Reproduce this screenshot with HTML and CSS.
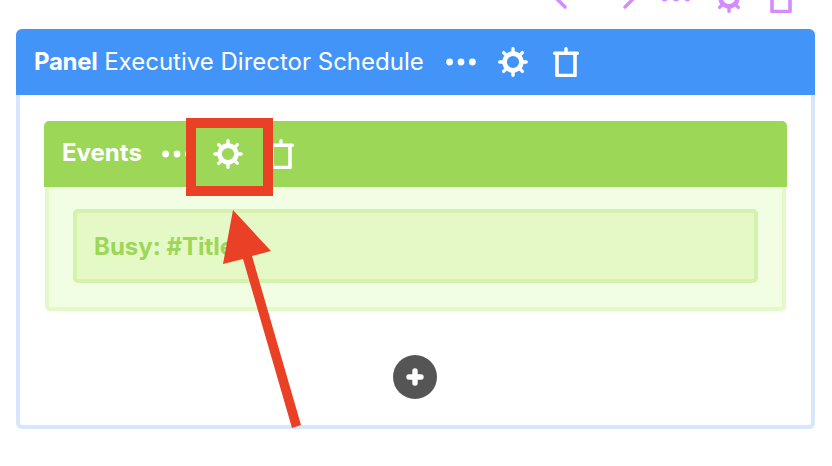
FILE: index.html
```html
<!DOCTYPE html>
<html lang="en">
<head>
    <meta charset="UTF-8" />
    <title>Executive Director Schedule</title>
    <link rel="stylesheet" href="styles.css">
</head>
<body>
<svg width="0" height="0" class="defs">
    <defs>
        <g id="gear">
            <circle cx="15" cy="15" r="8.4" fill="none" stroke="currentColor" stroke-width="4.6" />
            <g stroke="currentColor" stroke-width="3.4" stroke-linecap="round">
                <line x1="15" y1="5" x2="15" y2="1.8" />
                <line x1="15" y1="25" x2="15" y2="28.2" />
                <line x1="5" y1="15" x2="1.8" y2="15" />
                <line x1="25" y1="15" x2="28.2" y2="15" />
                <line x1="7.9" y1="7.9" x2="5.6" y2="5.6" />
                <line x1="22.1" y1="7.9" x2="24.4" y2="5.6" />
                <line x1="7.9" y1="22.1" x2="5.6" y2="24.4" />
                <line x1="22.1" y1="22.1" x2="24.4" y2="24.4" />
            </g>
        </g>
        <g id="trash" fill="none" stroke="currentColor" stroke-linecap="round" stroke-linejoin="round">
            <path d="M3.7 6.2h22.6" stroke-width="3.4" />
            <path d="M15 1.8v4" stroke-width="3.4" />
            <path d="M6 6.5v22h18v-22" stroke-width="3.6" />
        </g>
        <g id="dots" fill="currentColor">
            <circle cx="3.6" cy="15" r="3.4" />
            <circle cx="15" cy="15" r="3.4" />
            <circle cx="26.4" cy="15" r="3.4" />
        </g>
    </defs>
</svg>

<div class="toolbar">
    <svg class="icon tool-prev" viewBox="0 0 30 30"><path d="M14 6l-9 9 9 9" fill="none" stroke="currentColor" stroke-width="3.4" stroke-linecap="round" stroke-linejoin="round" /></svg>
    <svg class="icon tool-next" viewBox="0 0 30 30"><path d="M16 6l9 9-9 9" fill="none" stroke="currentColor" stroke-width="3.4" stroke-linecap="round" stroke-linejoin="round" /></svg>
    <svg class="icon tool-dots" viewBox="0 0 30 30"><use href="#dots" /></svg>
    <svg class="icon tool-gear" viewBox="0 0 30 30"><use href="#gear" /></svg>
    <svg class="icon tool-trash" viewBox="0 0 30 30"><use href="#trash" /></svg>
</div>

<div class="panel">
    <div class="panel-head">
        <span class="panel-title"><b>Panel</b> Executive Director Schedule</span>
        <svg class="icon head-dots" viewBox="0 0 30 30"><use href="#dots" /></svg>
        <svg class="icon head-gear" viewBox="0 0 30 30"><use href="#gear" /></svg>
        <svg class="icon head-trash" viewBox="0 0 30 30"><use href="#trash" /></svg>
    </div>

    <div class="events">
        <div class="events-head">
            <span class="events-title">Events</span>
            <svg class="icon events-dots" viewBox="0 0 30 30"><use href="#dots" /></svg>
            <svg class="icon events-gear" viewBox="0 0 30 30"><use href="#gear" /></svg>
            <svg class="icon events-trash" viewBox="0 0 30 30"><use href="#trash" /></svg>
        </div>
        <div class="events-body">
            <div class="event-item">Busy: #Title</div>
        </div>
    </div>

    <div class="add-row">
        <div class="add-button">
            <svg class="add-icon" viewBox="0 0 18 18"><path d="M9 3v12M3 9h12" stroke="currentColor" stroke-width="5.4" stroke-linecap="round" /></svg>
        </div>
    </div>
</div>

<!-- пометки поверх скриншота -->
<div class="callout-box"></div>
<svg class="callout-arrow" width="832" height="466" viewBox="0 0 832 466">
    <path d="M233 210L271 251 252 256 301 425 292 428 243 259 223 264Z" fill="#ea4025" />
</svg>
</body>
</html>
```

FILE: styles.css
```css
body {
    margin: 0;
    width: 832px;
    height: 466px;
    overflow: hidden;
    background-color: #ffffff;
    font-family: 'Inter', sans-serif;
    position: relative;
}

.defs {
    position: absolute;
}

.icon {
    display: block;
    flex: none;
    width: 30px;
    height: 30px;
}

/* верхняя панель, обрезана краем окна */
.toolbar {
    height: 29px;
    overflow: hidden;
    display: flex;
    justify-content: flex-end;
    padding-right: 36px;
    color: #d48bfb;
}

.toolbar .icon {
    margin-top: -17px;
}

.toolbar .tool-next {
    margin-left: 28px;
}

.toolbar .tool-dots {
    margin-left: 22px;
}

.toolbar .tool-gear {
    margin-left: 23px;
}

.toolbar .tool-trash {
    margin-left: 22px;
}

.panel {
    box-sizing: border-box;
    width: 799px;
    height: 400px;
    margin-left: 16px;
    border: 4px solid #d6e7fd;
    border-top: none;
    border-radius: 6px;
}

.panel-head {
    height: 66px;
    margin: 0 -4px;
    padding-left: 18px;
    display: flex;
    align-items: center;
    background-color: #4394f9;
    color: #ffffff;
    border-radius: 6px 6px 0 0;
}

.panel-title {
    font-size: 24px;
    font-weight: 400;
    white-space: nowrap;
    margin-top: -2px;
}

.panel-title b {
    font-weight: 700;
    letter-spacing: -0.3px;
}

.head-dots {
    margin-left: 22px;
}

.head-gear {
    margin-left: 22px;
}

.head-trash {
    margin-left: 23px;
}

.events {
    margin: 26px 24px 0;
}

.events-head {
    height: 66px;
    padding-left: 18px;
    display: flex;
    align-items: center;
    background-color: #9cd757;
    color: #ffffff;
    border-radius: 5px 5px 0 0;
}

.events-title {
    font-size: 24px;
    font-weight: 700;
    margin-top: -3px;
}

.events-dots {
    margin-left: 20px;
}

.events-gear {
    margin-left: 21px;
}

.events-trash {
    margin-left: 23px;
}

.events-body {
    margin: 0 1px;
    padding: 22px 24px 24px;
    background-color: #f1fee3;
    border: 4px solid #e4f9c8;
    border-top: none;
    border-radius: 0 0 5px 5px;
}

.event-item {
    box-sizing: border-box;
    height: 74px;
    padding-left: 17px;
    display: flex;
    align-items: center;
    background-color: #e4f9c6;
    border: 4px solid #d5f2ac;
    border-radius: 5px;
    color: #9cd757;
    font-size: 24px;
    font-weight: 700;
}

.add-row {
    margin-top: 44px;
    padding-right: 1px;
    display: flex;
    justify-content: center;
}

.add-button {
    width: 44px;
    height: 44px;
    border-radius: 50%;
    background-color: #555555;
    color: #ffffff;
    display: flex;
    align-items: center;
    justify-content: center;
}

.add-icon {
    width: 18px;
    height: 18px;
}

.callout-box {
    position: absolute;
    left: 186px;
    top: 118px;
    box-sizing: border-box;
    width: 87px;
    height: 78px;
    border: 10px solid #ea4025;
}

.callout-arrow {
    position: absolute;
    left: 0;
    top: 0;
}
```
